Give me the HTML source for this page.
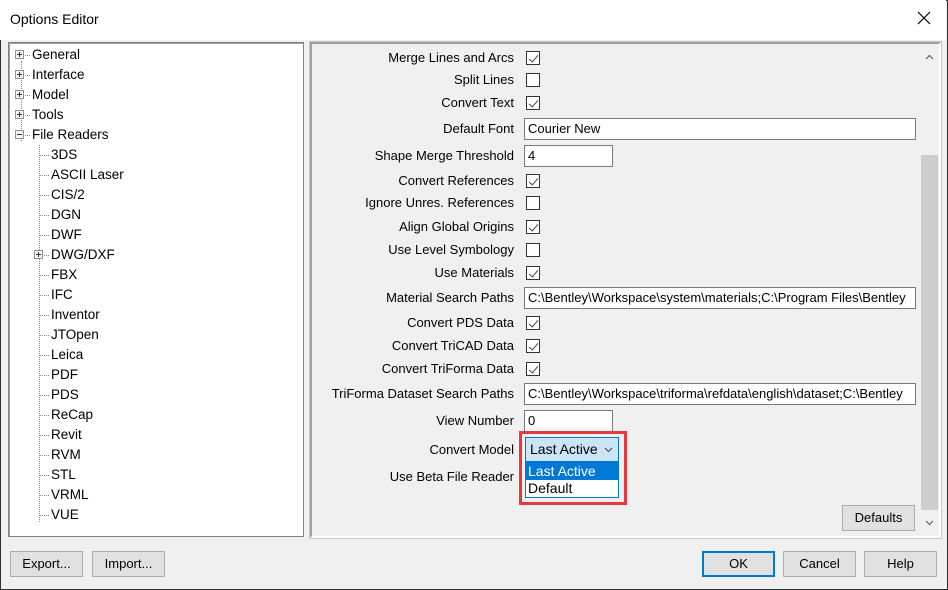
<!DOCTYPE html>
<html><head><style>
*{box-sizing:border-box;margin:0;padding:0}
body{width:948px;height:590px;background:#f0f0f0;font-family:"Liberation Sans",sans-serif;font-size:13px;color:#000;position:relative;overflow:hidden}
.win{position:absolute;left:0;top:0;width:948px;height:590px;border:1px solid #333}
.title{position:absolute;left:0;top:0;width:946px;height:40px;background:#fff}
.title span{position:absolute;left:10px;top:11px;font-size:14px}
.x{position:absolute;left:916px;top:10px}
.tree{position:absolute;left:8px;top:42px;width:296px;height:495px;background:#fff;border:1px solid #828282;box-shadow:inset 1px 1px 0 #a0a0a0}
.ti{position:absolute;white-space:nowrap;line-height:16px;font-size:13.5px}
.pb{position:absolute;width:9px;height:9px;border:1px solid #919191;background:#f4f4f4}
.pb:before{content:"";position:absolute;left:1px;top:3px;width:5px;height:1px;background:#333}
.pb.p:after{content:"";position:absolute;left:3px;top:1px;width:1px;height:5px;background:#333}
.dv{position:absolute;border-left:1px dotted #888;width:0}
.dh{position:absolute;border-top:1px dotted #888;height:0}
.rp{position:absolute;left:310px;top:42px;width:631px;height:496px;border:2px solid #a0a0a0;border-right-color:#fff;border-bottom-color:#fff;outline:1px solid #c8c8c8}
.lbl{position:absolute;right:434px;text-align:right;white-space:nowrap;line-height:16px}
.cb{position:absolute;left:526px;width:14px;height:14px;border:1px solid #333;background:#fff}
.cb.c:after{content:"";position:absolute;left:4px;top:1px;width:4px;height:8px;border-right:1px solid #444;border-bottom:1px solid #444;transform:rotate(40deg)}
.tb{position:absolute;left:524px;height:22px;border:1px solid #7a7a7a;background:#fff;padding:2px 3px;white-space:nowrap;overflow:hidden;line-height:16px}
.btn{position:absolute;height:26px;border:1px solid #adadad;background:#e1e1e1;text-align:center;line-height:24px}
.sb{position:absolute;left:921px;top:44px;width:17px;height:491px;background:#f0f0f0}
</style></head><body>
<div class="win"></div>
<div class="title"><span>Options Editor</span>
<svg class="x" width="16" height="16"><path d="M2 2L14 14M14 2L2 14" stroke="#000" stroke-width="1.2"/></svg></div>

<div class="tree">
<div class="dv" style="left:12px;top:18px;height:80px"></div>
<div class="dv" style="left:30px;top:102px;height:377px"></div>
</div>
<div id="t"></div>

<div class="rp"></div>
<div class="sb">
<svg style="position:absolute;left:4px;top:10px" width="9" height="6"><path d="M1 5L4.5 1.5L8 5" stroke="#555" fill="none"/></svg>
<div style="position:absolute;left:0;top:111px;width:17px;height:355px;background:#cdcdcd"></div>
<svg style="position:absolute;left:4px;top:476px" width="9" height="6"><path d="M1 1L4.5 4.5L8 1" stroke="#555" fill="none"/></svg>
</div>

<div class="lbl" style="top:50px">Merge Lines and Arcs</div><div class="cb c" style="top:51px"></div>
<div class="lbl" style="top:72px">Split Lines</div><div class="cb" style="top:73px"></div>
<div class="lbl" style="top:95px">Convert Text</div><div class="cb c" style="top:96px"></div>
<div class="lbl" style="top:121px">Default Font</div><div class="tb" style="top:118px;width:392px">Courier New</div>
<div class="lbl" style="top:148px">Shape Merge Threshold</div><div class="tb" style="top:145px;width:89px">4</div>
<div class="lbl" style="top:173px">Convert References</div><div class="cb c" style="top:174px"></div>
<div class="lbl" style="top:195px">Ignore Unres. References</div><div class="cb" style="top:196px"></div>
<div class="lbl" style="top:219px">Align Global Origins</div><div class="cb c" style="top:220px"></div>
<div class="lbl" style="top:242px">Use Level Symbology</div><div class="cb" style="top:243px"></div>
<div class="lbl" style="top:265px">Use Materials</div><div class="cb c" style="top:266px"></div>
<div class="lbl" style="top:290px">Material Search Paths</div><div class="tb" style="top:287px;width:392px">C:\Bentley\Workspace\system\materials;C:\Program Files\Bentley</div>
<div class="lbl" style="top:315px">Convert PDS Data</div><div class="cb c" style="top:316px"></div>
<div class="lbl" style="top:338px">Convert TriCAD Data</div><div class="cb c" style="top:339px"></div>
<div class="lbl" style="top:361px">Convert TriForma Data</div><div class="cb c" style="top:362px"></div>
<div class="lbl" style="top:386px">TriForma Dataset Search Paths</div><div class="tb" style="top:383px;width:392px">C:\Bentley\Workspace\triforma\refdata\english\dataset;C:\Bentley</div>
<div class="lbl" style="top:413px">View Number</div><div class="tb" style="top:410px;width:89px">0</div>
<div class="lbl" style="top:442px">Convert Model</div>
<div class="lbl" style="top:469px">Use Beta File Reader</div>

<div style="position:absolute;left:519px;top:431px;width:108px;height:74px;border:3px solid #e8383d"></div>
<div style="position:absolute;left:525px;top:437px;width:94px;height:25px;border:1px solid #0078d7;background:#cce4f7;padding:3px 4px;font-size:14px">Last Active
<svg style="position:absolute;left:78px;top:9px" width="9" height="6"><path d="M1 1L4.5 4.5L8 1" stroke="#444" fill="none"/></svg></div>
<div style="position:absolute;left:525px;top:462px;width:94px;height:36px;border:1px solid #0078d7;background:#fff;font-size:14px">
<div style="background:#0078d7;color:#fff;height:17px;line-height:17px;padding-left:2px">Last Active</div>
<div style="height:17px;line-height:17px;padding-left:2px">Default</div></div>

<div class="btn" style="left:842px;top:505px;width:73px">Defaults</div>
<div class="btn" style="left:10px;top:551px;width:73px;height:26px">Export...</div>
<div class="btn" style="left:92px;top:551px;width:73px;height:26px">Import...</div>
<div class="btn" style="left:702px;top:551px;width:73px;border:2px solid #0078d7;line-height:22px">OK</div>
<div class="btn" style="left:783px;top:551px;width:73px">Cancel</div>
<div class="btn" style="left:864px;top:551px;width:73px">Help</div>

<script>
(function(){
var tops=["General","Interface","Model","Tools","File Readers"];
var ch=["3DS","ASCII Laser","CIS/2","DGN","DWF","DWG/DXF","FBX","IFC","Inventor","JTOpen","Leica","PDF","PDS","ReCap","Revit","RVM","STL","VRML","VUE"];
var h="";
tops.forEach(function(t,i){var y=47+i*20;
h+='<div class="pb'+(i<4?' p':'')+'" style="left:15px;top:'+(y+3)+'px"></div><div class="dh" style="left:25px;top:'+(y+8)+'px;width:5px"></div><div class="ti" style="left:32px;top:'+y+'px">'+t+'</div>';});
ch.forEach(function(t,i){var y=147+i*20;
if(t=="DWG/DXF")h+='<div class="pb p" style="left:34px;top:'+(y+3)+'px"></div>';
h+='<div class="dh" style="left:'+(t=="DWG/DXF"?44:39)+'px;top:'+(y+8)+'px;width:'+(t=="DWG/DXF"?5:10)+'px"></div><div class="ti" style="left:51px;top:'+y+'px">'+t+'</div>';});
document.getElementById("t").innerHTML=h;
})();
</script>
</body></html>
